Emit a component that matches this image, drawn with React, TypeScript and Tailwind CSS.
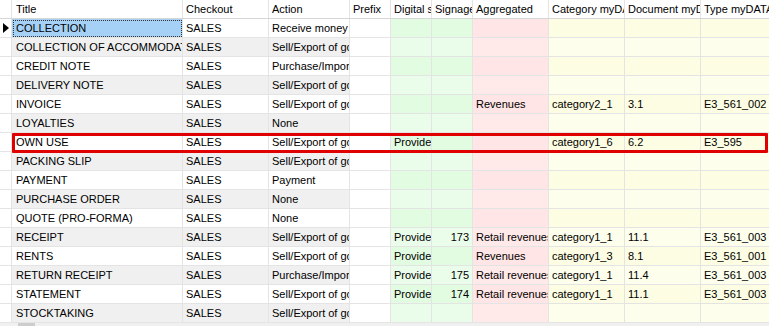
type Row = {
  title: string;
  action: string;
  digital?: string;
  signage?: string;
  aggregated?: string;
  category?: string;
  document?: string;
  type?: string;
};

const rows: Row[] = [
  { title: "COLLECTION", action: "Receive money" },
  { title: "COLLECTION OF ACCOMMODATION", action: "Sell/Export of goods" },
  { title: "CREDIT NOTE", action: "Purchase/Import" },
  { title: "DELIVERY NOTE", action: "Sell/Export of goods" },
  { title: "INVOICE", action: "Sell/Export of goods", aggregated: "Revenues", category: "category2_1", document: "3.1", type: "E3_561_002" },
  { title: "LOYALTIES", action: "None" },
  { title: "OWN USE", action: "Sell/Export of goods", digital: "Provided", category: "category1_6", document: "6.2", type: "E3_595" },
  { title: "PACKING SLIP", action: "Sell/Export of goods" },
  { title: "PAYMENT", action: "Payment" },
  { title: "PURCHASE ORDER", action: "None" },
  { title: "QUOTE (PRO-FORMA)", action: "None" },
  { title: "RECEIPT", action: "Sell/Export of goods", digital: "Provided", signage: "173", aggregated: "Retail revenues", category: "category1_1", document: "11.1", type: "E3_561_003" },
  { title: "RENTS", action: "Sell/Export of goods", digital: "Provided", aggregated: "Revenues", category: "category1_3", document: "8.1", type: "E3_561_001" },
  { title: "RETURN RECEIPT", action: "Purchase/Import", digital: "Provided", signage: "175", aggregated: "Retail revenues", category: "category1_1", document: "11.4", type: "E3_561_003" },
  { title: "STATEMENT", action: "Sell/Export of goods", digital: "Provided", signage: "174", aggregated: "Retail revenues", category: "category1_1", document: "11.1", type: "E3_561_003" },
  { title: "STOCKTAKING", action: "Sell/Export of goods" },
];

const cell = "h-full shrink-0 overflow-hidden whitespace-nowrap border-r border-b border-[#e4e4e4] pl-[3px] leading-[19px]";

export default function App() {
  return (
    <div className="relative h-[326px] w-[769px] overflow-hidden bg-white text-[11px] text-black" style={{ fontFamily: '"Liberation Sans", Arial, sans-serif' }}>
      {/* header */}
      <div className="flex h-[19px] border-b border-[#d6d6d6]">
        <div className="h-full w-[12px] shrink-0 border-r border-[#e4e4e4]" />
        <div className={`${cell} w-[171px] border-b-0 pl-[4px]`}>Title</div>
        <div className={`${cell} w-[86px] border-b-0`}>Checkout</div>
        <div className={`${cell} w-[81px] border-b-0`}>Action</div>
        <div className={`${cell} w-[41px] border-b-0`}>Prefix</div>
        <div className={`${cell} w-[41px] border-b-0`}>Digital signature</div>
        <div className={`${cell} w-[41px] border-b-0`}>Signage</div>
        <div className={`${cell} w-[76px] border-b-0`}>Aggregated</div>
        <div className={`${cell} w-[76px] border-b-0`}>Category myDATA</div>
        <div className={`${cell} w-[76px] border-b-0`}>Document myDATA</div>
        <div className={`${cell} w-[68px] border-b-0 border-r-0`}>Type myDATA</div>
      </div>

      {/* rows */}
      {rows.map((r, i) => {
        const odd = i % 2 === 1;
        const base = odd ? "bg-[#f0f0f0]" : "bg-white";
        const green = odd ? "bg-[#eafdea]" : "bg-[#e2fce2]";
        const pink = odd ? "bg-[#ffe9e9]" : "bg-[#ffe5e5]";
        const yellow = odd ? "bg-[#fefeec]" : "bg-[#fdfde3]";
        return (
          <div key={r.title} className="flex h-[19px]">
            <div className="flex h-full w-[12px] shrink-0 items-center border-r border-b border-[#e4e4e4] bg-white">
              {i === 0 && (
                <svg width="6" height="10" viewBox="0 0 6 10" className="ml-[3px]">
                  <path d="M0 0 L6 5 L0 10 Z" fill="#000" />
                </svg>
              )}
            </div>
            <div className={`${cell} w-[171px] pl-[4px] ${i === 0 ? "bg-[#a6d1f6] outline-1 outline-dotted -outline-offset-2 outline-[#333]" : base}`}>
              {r.title}
            </div>
            <div className={`${cell} w-[86px] ${base}`}>SALES</div>
            <div className={`${cell} w-[81px] ${base}`}>{r.action}</div>
            <div className={`${cell} w-[41px] bg-white`} />
            <div className={`${cell} w-[41px] ${green}`}>{r.digital}</div>
            <div className={`${cell} w-[41px] pr-[3px] text-right ${green}`}>{r.signage}</div>
            <div className={`${cell} w-[76px] ${pink}`}>{r.aggregated}</div>
            <div className={`${cell} w-[76px] ${yellow}`}>{r.category}</div>
            <div className={`${cell} w-[76px] ${yellow}`}>{r.document}</div>
            <div className={`${cell} w-[68px] border-r-0 ${yellow}`}>{r.type}</div>
          </div>
        );
      })}

      {/* scrollbar strip */}
      <div className="flex h-[3px] bg-[#f0f0f0]">
        <div className="ml-[18px] h-full w-[17px] bg-[#cdcdcd]" />
      </div>

      {/* highlight box */}
      <div className="pointer-events-none absolute left-[12px] top-[133px] h-[20px] w-[756px] rounded-[1px] border-[3px] border-[#e00000]" />
    </div>
  );
}
